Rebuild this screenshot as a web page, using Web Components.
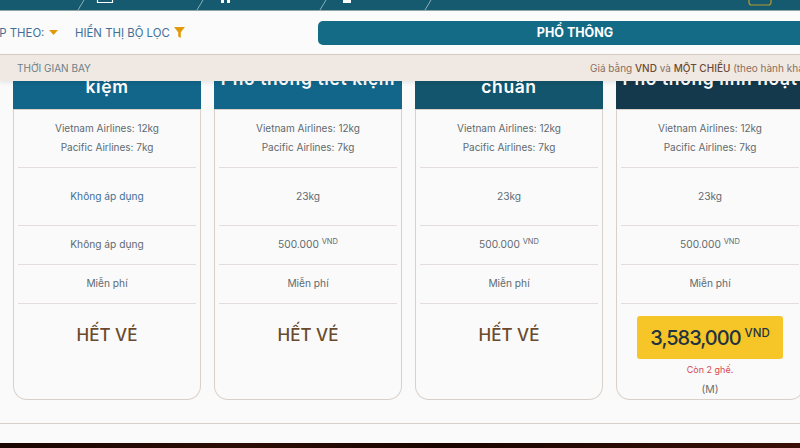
<!DOCTYPE html>
<html lang="vi">
<head>
<meta charset="utf-8">
<title>Chọn chuyến bay</title>
<style>
  html, body { margin: 0; height: 100%; }
  body { width: 800px; height: 448px; overflow: hidden; background: #fafafa; font-family: "Inter", "Noto Sans", sans-serif; }
</style>
</head>
<body>
<flight-page>
  <step-bar slot="steps"></step-bar>
  <filter-bar slot="filter"></filter-bar>
  <note-bar slot="note"></note-bar>
  <fare-card title-text="Phổ thông tiết kiệm" cabin="Không áp dụng" change="Không áp dụng" muted></fare-card>
  <fare-card title-text="Phổ thông tiết kiệm" single cabin="23kg" change="500.000"></fare-card>
  <fare-card title-text="Phổ thông tiêu chuẩn" head="#13556c" cabin="23kg" change="500.000"></fare-card>
  <fare-card title-text="Phổ thông linh hoạt" single head="#14384c" cabin="23kg" change="500.000" price="3,583,000"></fare-card>
</flight-page>

<script>
  class FlightPage extends HTMLElement {
    constructor() {
      super();
      this.attachShadow({ mode: "open" });
      this.shadowRoot.innerHTML = `
        <style>
          :host { display: flex; flex-direction: column; width: 800px; height: 448px; overflow: hidden; }
          .scroll { flex: 1; min-height: 0; overflow: hidden; }
          .cards { display: flex; gap: 13px; margin: -20px -4px 0 13px; }
          .foot { height: 5px; background: linear-gradient(90deg, #1a0602, #2c0d05 30%, #190500 55%, #3a1008); }
          hr { border: 0; border-top: 1px solid #d8d0cb; margin: 23px 0 0; }
        </style>
        <slot name="steps"></slot>
        <slot name="filter"></slot>
        <slot name="note"></slot>
        <div class="scroll">
          <div class="cards"><slot></slot></div>
          <hr>
        </div>
        <div class="foot"></div>
      `;
    }
  }

  class StepBar extends HTMLElement {
    constructor() {
      super();
      this.attachShadow({ mode: "open" });
      this.shadowRoot.innerHTML = `
        <style>
          :host { display: block; height: 10px; background: #155a6f; border-bottom: 1px solid #8fa5a8; overflow: hidden; }
          svg { display: block; }
        </style>
        <svg width="800" height="10" viewBox="0 0 800 10" fill="none">
          <g stroke="#8db0b8" stroke-width="1">
            <path d="M84 0 78 10"/><path d="M203 0 197 10"/><path d="M326 0 320 10"/><path d="M431 0 425 10"/>
          </g>
          <path d="M97.5 0v2.5h15V0" stroke="#fff" stroke-width="1.2"/>
          <path d="M221 0h3v3h-3zM227 0h3v3h-3z" fill="#fff"/>
          <rect x="343" y="0" width="8" height="3" fill="#fff"/>
          <rect x="749" y="-8" width="22" height="13" rx="2.5" stroke="#b89a2c" stroke-width="1.2"/>
        </svg>
      `;
    }
  }

  class FilterBar extends HTMLElement {
    constructor() {
      super();
      this.attachShadow({ mode: "open" });
      this.shadowRoot.innerHTML = `
        <style>
          :host { display: flex; align-items: center; height: 43px; background: #fbfbfb; color: #3f7098; font-size: 11.4px; overflow: hidden; }
          .left { display: flex; align-items: center; flex: none; width: 359px; margin-left: -41px; white-space: nowrap; }
          .sort { display: flex; align-items: center; gap: 5px; width: 116px; flex: none; }
          .show { display: flex; align-items: center; gap: 4px; }
          .tab { flex: none; width: 514px; height: 24px; display: flex; align-items: center; justify-content: center; background: #136b86; border-radius: 5px 0 0 5px; color: #fff; font-weight: 700; font-size: 12.5px; }
        </style>
        <div class="left">
          <div class="sort">SẮP XẾP THEO:
            <svg width="9" height="5" viewBox="0 0 9 5"><path d="M0 0h9L4.5 5z" fill="#e09a0c"/></svg>
          </div>
          <div class="show">HIỂN THỊ BỘ LỌC
            <svg width="11" height="11" viewBox="0 0 11 11"><path d="M0 0h11L6.8 5.2V11L4.2 9.4V5.2z" fill="#e09a0c"/></svg>
          </div>
        </div>
        <div class="tab">PHỔ THÔNG</div>
      `;
    }
  }

  class NoteBar extends HTMLElement {
    constructor() {
      super();
      this.attachShadow({ mode: "open" });
      this.shadowRoot.innerHTML = `
        <style>
          :host { display: flex; align-items: center; height: 27px; box-sizing: border-box; background: #f0e9e3; border-top: 1px solid #d6c9c0; padding-left: 17px; font-size: 10px; color: #6b7f86; white-space: nowrap; overflow: hidden; position: relative; z-index: 1; box-shadow: 0 2px 4px rgba(0,0,0,.08); }
          .time { flex: none; width: 573px; }
          .price { flex: none; color: #8b6f5e; }
          b { font-weight: 500; color: #6d4a33; }
        </style>
        <span class="time">THỜI GIAN BAY</span>
        <span class="price">Giá bằng <b>VND</b> và <b>MỘT CHIỀU</b> (theo hành khách)</span>
      `;
    }
  }

  class FareCard extends HTMLElement {
    connectedCallback() {
      if (this.shadowRoot) return;
      this.attachShadow({ mode: "open" });
      const cabin = this.getAttribute("cabin");
      const change = this.getAttribute("change");
      const price = this.getAttribute("price");
      const head = this.getAttribute("head") || "#12668a";
      const muted = this.hasAttribute("muted");
      const changeText = change === "500.000" ? `<span>500.000 <sup>VND</sup></span>` : change;
      const foot = price
        ? `<div class="price"><span>${price}</span> <sup>VND</sup></div><div class="left">Còn 2 ghế.</div><div class="cls">(M)</div>`
        : `<div class="out">HẾT VÉ</div>`;
      this.shadowRoot.innerHTML = `
        <style>
          :host { display: block; flex: none; width: 188px; box-sizing: border-box; height: 339px; border: 1px solid #d9d0ca; border-top: 0; border-radius: 0 0 14px 14px; color: #5f6a70; font-size: 10.2px; text-align: center; }
          .head { height: 49px; background: ${head}; color: #fff; font-size: 17.5px; font-weight: 600; letter-spacing: .6px; line-height: 21px; display: flex; align-items: flex-end; justify-content: center; padding: 0 0 12px; box-sizing: border-box; overflow: hidden; margin: 0 -1px; border-bottom: 1px solid #d9d0ca; }
          .head span { max-width: 150px; }
          :host([single]) .head { padding-bottom: 20px; }
          :host([single]) .head span { max-width: none; white-space: nowrap; }
          .row { margin: 0 4px; padding-bottom: 2px; border-bottom: 1px solid #e3dedb; display: flex; flex-direction: column; align-items: center; justify-content: center; box-sizing: border-box; }
          .bag { height: 58px; line-height: 19px; font-size: 10px; }
          .cabin { height: 58px; ${muted ? "color: #3f7098;" : ""} }
          .change, .seat { height: 39px; }
          .foot { display: flex; flex-direction: column; align-items: center; }
          sup { font-size: 7.5px; line-height: 0; vertical-align: 4px; }
          .out { margin-top: 21px; font-size: 17px; font-weight: 500; color: #6a4a2c; }
          .price { margin-top: 12px; width: 146px; height: 43px; box-sizing: border-box; background: #f6c527; border-radius: 3px; color: #1f3440; font-size: 20px; font-weight: 500; letter-spacing: -1px; display: flex; align-items: center; justify-content: center; gap: 4px; }
          .price sup { font-size: 11.5px; letter-spacing: 0; vertical-align: 0; position: relative; top: -5px; }
          .left { margin-top: 5px; font-size: 9px; color: #d9464f; }
          .cls { margin-top: 8px; font-size: 10.5px; color: #6d6d6d; }
        </style>
        <div class="head"><span>${this.getAttribute("title-text")}</span></div>
        <div class="row bag"><div>Vietnam Airlines: 12kg</div><div>Pacific Airlines: 7kg</div></div>
        <div class="row cabin">${cabin}</div>
        <div class="row change">${changeText}</div>
        <div class="row seat">Miễn phí</div>
        <div class="foot">${foot}</div>
      `;
    }
  }

  customElements.define("flight-page", FlightPage);
  customElements.define("step-bar", StepBar);
  customElements.define("filter-bar", FilterBar);
  customElements.define("note-bar", NoteBar);
  customElements.define("fare-card", FareCard);
</script>
</body>
</html>
